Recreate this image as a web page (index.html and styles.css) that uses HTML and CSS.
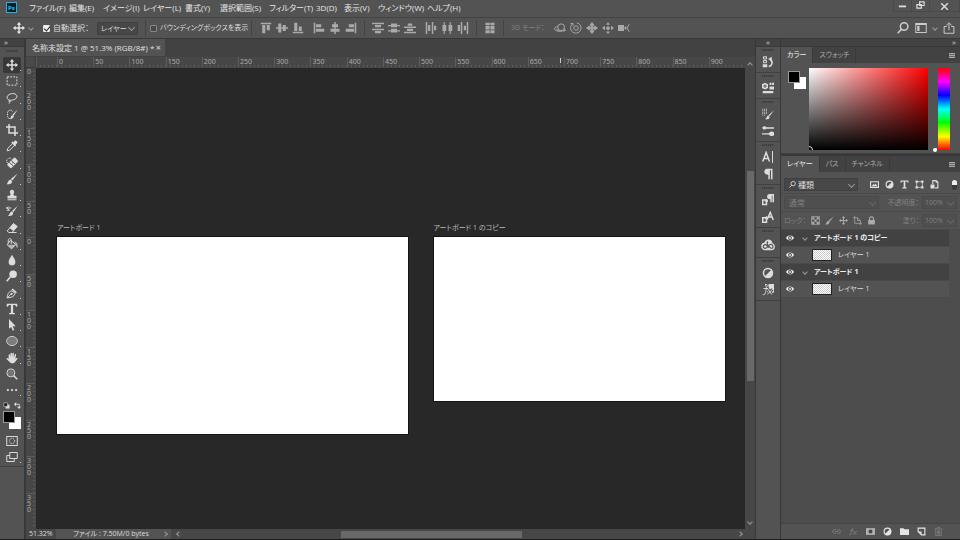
FILE: index.html
```html
<!DOCTYPE html>
<html lang="ja">
<head>
    <meta charset="UTF-8">
    <meta name="viewport" content="width=device-width, initial-scale=1.0">
    <title>名称未設定 1</title>
    <link rel="stylesheet" href="styles.css">
</head>
<body>
    <!-- Icon set -->
    <svg class="sprite" aria-hidden="true">
        <symbol id="move" viewBox="0 0 16 16"><path d="M8 0l3 3.500H9V7h3.500V5L16 8l-3.500 3V9H9v3.500h2L8 16l-3-3.500h2V9H3.500v2L0 8l3.500-3v2H7V3.500H5z"/></symbol>
        <symbol id="marquee" viewBox="0 0 16 16"><rect class="line" x="1.500" y="2.500" width="13" height="11" stroke-dasharray="2.500 1.600"/></symbol>
        <symbol id="lasso" viewBox="0 0 16 16"><path class="line" d="M5 11C1 10 0 6 4 3.500S14 2 14.500 5.500 10 11 6 11c-2-.5-3 1.500-1.500 2s2.500-1 1.500-2M4.500 13c.5 1 0 2-.5 2.500"/></symbol>
        <symbol id="quick" viewBox="0 0 16 16"><path class="line" stroke-dasharray="2 1" d="M8 13.500a4 4 0 0 1-6-2V6c1-4 6-4 7-1"/><path d="M15.500 2L10 10.500 8.500 9zM8.300 9.500l2 1.500c0 3-3 3.500-5 3 1.500-1 1-4 3-4.500z"/></symbol>
        <symbol id="crop" viewBox="0 0 16 16"><path class="thick" d="M4 0v12h12M0 4h12v12"/></symbol>
        <symbol id="dropper" viewBox="0 0 16 16"><path d="M10 3l1.500-2c1-1.500 4.500 1 3.500 3l-2 2 .5 1-1.500 1.500-5-5L8.500 2z"/><path class="line" d="M8 5.500L2.500 11 1.500 14.500 5 13.500 10.500 8"/></symbol>
        <symbol id="heal" viewBox="0 0 16 16"><path d="M10 1.500a2 2 0 0 1 3 0L15 4a2 2 0 0 1 0 3l-7 7a2 2 0 0 1-3 0l-2.500-2.500a2 2 0 0 1 0-3z"/><path class="cut" d="M7 4.500l5 5M4.500 7l5 5M8 8h1"/><path class="line" stroke-dasharray="1.500 1" d="M2 8C-1 4 3 0 7 2"/></symbol>
        <symbol id="brush" viewBox="0 0 16 16"><path d="M15.500.5L8.500 10 6.500 8zM6 8.500L8 10.500c.5 4-4 5-7.500 4.500C3 13.500 2 9.500 6 8.500z"/></symbol>
        <symbol id="stamp" viewBox="0 0 16 16"><path d="M8 1a3 3 0 0 1 2.500 4.500C9.500 7 10 8 11 9h3v3.500H2V9h3c1-1 1.500-2 .5-3.500A3 3 0 0 1 8 1zM2 13.500h12V15H2z"/></symbol>
        <symbol id="history" viewBox="0 0 16 16"><path d="M15.500 1L10 9.500 8 8zM7.500 8.500l2 1.500c.5 4-3 5-7 4.500 2.500-1 2-5 5-6z"/><path class="line" d="M0 4h7M1 7h4M3 2L1 4l3 2.500"/></symbol>
        <symbol id="eraser" viewBox="0 0 16 16"><path d="M10 2l5 4-5 5.500L5 7.500z"/><path class="line" d="M10 2l5 4-7 8H4L1.500 12zM8 14h6M5 7.500l5 4"/></symbol>
        <symbol id="bucket" viewBox="0 0 16 16"><path class="line" d="M6 3l7 5.500-5.500 6L1.500 9zM3 7V3c0-3 4-3 4 0v5"/><path d="M11 5c3 0 5 2 4.500 8-1.500 0-2.500-2-2-4.500zM2 9h11l-5.500 5z" opacity=".7"/></symbol>
        <symbol id="blur" viewBox="0 0 16 16"><path d="M8 1c2 4 4.500 6 4.500 9.500a4.500 4.500 0 0 1-9 0C3.500 7 6 5 8 1z"/></symbol>
        <symbol id="dodge" viewBox="0 0 16 16"><circle cx="9.500" cy="5.500" r="5"/><path class="thick" d="M6 9l-5 6"/></symbol>
        <symbol id="pen" viewBox="0 0 16 16"><path class="line" d="M1.500 14.500C2 10 3 6 8 5l4 4c-1 4-5 5-10.500 5.500zl5-5"/><circle cx="7.500" cy="9" r="1.500"/><path d="M9 2l5.500 5L13 8.500 7.500 3.500z"/></symbol>
        <symbol id="type" viewBox="0 0 16 16"><path d="M1 1h14v4h-1.500c0-2-1-2.500-4-2.500V13l2.500.5V15H4v-1.500l2.500-.5V2.500c-3 0-4 .5-4 2.500H1z"/></symbol>
        <symbol id="arrow" viewBox="0 0 16 16"><path d="M4 0l9 9.500H9l2 5L9 15.500l-2-5-3 2.500z"/></symbol>
        <symbol id="ellipse" viewBox="0 0 16 16"><ellipse class="line" cx="8" cy="8" rx="7" ry="6"/><ellipse cx="8" cy="8" rx="6" ry="5" opacity=".3"/></symbol>
        <symbol id="hand" viewBox="0 0 16 16"><path d="M3.500 9V4c0-1.200 2-1.200 2 0l.5 3V2c0-1.200 2-1.200 2 0v5l.7-5.300c.2-1.200 2-1 1.900.3L10.400 7.500l1.200-4c.4-1.200 2-.8 1.800.4L12.500 9l1.500-1c1-.5 2 .5 1 1.500L11.500 14c-1 1.500-5 1.500-6 0L1 9.500C.3 8.500 1.500 7.500 2.500 8.500z"/></symbol>
        <symbol id="zoom" viewBox="0 0 16 16"><circle class="line" cx="6.500" cy="6.500" r="5.300"/><circle cx="6.500" cy="6.500" r="4" opacity=".25"/><path class="thick" d="M10 10l5 5"/></symbol>
        <symbol id="dots" viewBox="0 0 16 16"><circle cx="2.500" cy="8" r="1.500"/><circle cx="8" cy="8" r="1.500"/><circle cx="13.500" cy="8" r="1.500"/></symbol>
        <symbol id="mini" viewBox="0 0 16 16"><path d="M6 6h9v9H6z"/><path class="line ink" d="M2 2h8v8H2z"/></symbol>
        <symbol id="swap" viewBox="0 0 16 16"><path class="thick" d="M3 5h9v8"/><path d="M5 0v10L0 5zM7 11h9l-4.500 5z"/></symbol>
        <symbol id="mask" viewBox="0 0 16 16"><rect class="line" x="1" y="2" width="14" height="12"/><circle class="line" stroke-dasharray="1.500 1" cx="8" cy="8" r="3.500"/></symbol>
        <symbol id="screen" viewBox="0 0 16 16"><path class="line" d="M5 2h10v8H5zM11 10v4H1V6h4"/></symbol>

        <symbol id="al-top" viewBox="0 0 16 16"><path d="M1 1h14v2H1zM3 4h4v11H3zM9 4h4v7H9z"/></symbol>
        <symbol id="al-mid" viewBox="0 0 16 16"><path d="M0 7h16v2H0zM3 2h4v12H3zM9 4h4v8H9z"/></symbol>
        <symbol id="al-bot" viewBox="0 0 16 16"><path d="M1 13h14v2H1zM3 1h4v11H3zM9 6h4v6H9z"/></symbol>
        <symbol id="al-left" viewBox="0 0 16 16"><path d="M1 1h2v14H1zM4 3h7v4H4zM4 9h11v4H4z"/></symbol>
        <symbol id="al-cen" viewBox="0 0 16 16"><path d="M7 0h2v16H7zM4 3h8v4H4zM2 9h12v4H2z"/></symbol>
        <symbol id="al-right" viewBox="0 0 16 16"><path d="M13 1h2v14h-2zM5 3h7v4H5zM1 9h11v4H1z"/></symbol>
        <symbol id="di-top" viewBox="0 0 16 16"><path d="M0 1h16v2H0zM4 4h8v3H4zM0 9h16v2H0zM4 12h8v3H4z"/></symbol>
        <symbol id="di-mid" viewBox="0 0 16 16"><path d="M0 4h16v1.500H0zM4 2h8v5H4zM0 11h16v1.500H0zM4 9h8v5H4z"/></symbol>
        <symbol id="di-bot" viewBox="0 0 16 16"><path d="M0 6h16v2H0zM5 2h6v3H5zM0 13h16v2H0zM4 9h8v3H4z"/></symbol>
        <symbol id="di-left" viewBox="0 0 16 16"><path d="M1 0h2v16H1zM4 4h3v8H4zM9 0h2v16H9zM12 5h3v6h-3z"/></symbol>
        <symbol id="di-cen" viewBox="0 0 16 16"><path d="M3.500 0H5v16H3.500zM2 4h5v8H2zM11.500 0H13v16h-1.500zM10 4h5v8h-5z"/></symbol>
        <symbol id="di-right" viewBox="0 0 16 16"><path d="M5 0h2v16H5zM1 4h3v8H1zM13 0h2v16h-2zM9 5h3v6H9z"/></symbol>
        <symbol id="auto" viewBox="0 0 16 16"><path d="M2 1h5.500v3H2zM8.500 1H14v3H8.500zM2 5h5.500v5H2zM8.500 5H14v5H8.500zM2 11h5.500v4H2zM8.500 11H14v4H8.500z"/></symbol>
        <symbol id="orbit" viewBox="0 0 16 16"><circle class="line" cx="9.500" cy="7" r="4.500"/><path class="line" d="M5 6C0 7-1 10 3 11.500s9 1 12-1M3 9l4 4M13 8.500l2.500 2-2.500 2.500"/></symbol>
        <symbol id="roll" viewBox="0 0 16 16"><circle class="line" cx="8" cy="8" r="3"/><path class="line" d="M4 2a7 7 0 1 0 5-1M4 2H1M4 2v3"/></symbol>
        <symbol id="pan" viewBox="0 0 16 16"><path d="M8 0l3 4H9v3h3V5l4 3-4 3V9H9v3h2l-3 4-3-4h2V9H4v2L0 8l4-3v2h3V4H5z"/><path class="line" d="M5 5h6v6H5z"/></symbol>
        <symbol id="slide" viewBox="0 0 16 16"><circle cx="8" cy="8" r="2.500"/><path d="M8 0l2.500 3.500h-5zM8 16l2.500-3.500h-5zM0 8l4-3v6zM16 8l-4-3v6z"/></symbol>
        <symbol id="camera" viewBox="0 0 16 16"><path d="M0 4h8v8H0zM8 8l3-3v6z"/><path class="line" d="M15 3l-3 5 3 5"/></symbol>
        <symbol id="search" viewBox="0 0 16 16"><circle class="thick" cx="9.500" cy="6" r="5"/><path class="thick" d="M6 9.500l-5 5.500"/></symbol>
        <symbol id="work" viewBox="0 0 16 16"><rect class="line" x="1" y="2" width="14" height="12"/><path d="M3 5h3v7H3zM1 2h14v2H1z"/></symbol>
        <symbol id="share" viewBox="0 0 16 16"><path class="line" d="M5 6H1.500v9h13V6H11M8 11V2M4.500 4.500L8 1l3.500 3.500"/></symbol>

        <symbol id="p-history" viewBox="0 0 16 16"><path class="line" d="M2 1h4v3H2zM2 6h4v3H2z"/><path d="M1 11h6v4H1z"/><path class="thick" d="M9 14c5-1 6-7 2-9"/><path d="M8 4l5-3v6z"/></symbol>
        <symbol id="p-lib" viewBox="0 0 16 16"><path d="M0 3l4-2 4 2v5l-4 2-4-2zM10 1h2.500v3H10zM13.500 1H16v3h-2.500zM10 6h6v4h-6zM1 12h14v3H1z"/><circle class="cut" cx="4" cy="5.500" r="1.500"/></symbol>
        <symbol id="p-brush" viewBox="0 0 16 16"><path d="M16 3L10 11 8.500 9.500zM8 10l2 1.500c0 3.500-3 4-6 3.500 2-1 2-4 4-5z"/><path class="line" stroke-dasharray="1.200 .8" d="M1 1v9M3.500 1v9M6 1v7"/></symbol>
        <symbol id="p-brushes" viewBox="0 0 16 16"><path d="M0 4c2-3 4-3 6-1h10v2H6c-2 2-4 1-6-1zM0 11h9c2-3 5-3 7-1v4c-2 1-5 1-7-1.500H0z"/></symbol>
        <symbol id="p-char" viewBox="0 0 16 16"><path class="thick" d="M1 14L5.500 2 10 14M3 10h5"/><path class="line" d="M14 0v16"/></symbol>
        <symbol id="p-para" viewBox="0 0 16 16"><path d="M7 1h7v14h-2V3h-1.500v12h-2V9C1 9 2 1 7 1z"/></symbol>
        <symbol id="p-pstyle" viewBox="0 0 16 16"><path d="M10 0h6v11h-2V2h-1v9h-2V7C5 7 6 0 10 0z"/><circle cx="6" cy="9" r="2"/><path class="thick" d="M1 8h5v6H1z"/></symbol>
        <symbol id="p-cstyle" viewBox="0 0 16 16"><path class="thick" d="M7 11l4-9 4 10M9 8h5"/><circle cx="6" cy="9" r="2"/><path class="thick" d="M1 9h5v6H1z"/></symbol>
        <symbol id="p-cc" viewBox="0 0 16 16"><path d="M4 5c2-5 9-4 9 1 4 1 4 8-1 8H4C-1 13-1 6 4 5z"/><path class="cut" d="M9 11L6.500 8.500C4 6 1 9.500 3.500 11.500c2 1 3.500-.5 5-2.500s4-2.500 5 0-1 3-2.500 2.500L8 8.500C7 7 6 5.500 8 4"/></symbol>
        <symbol id="p-adj" viewBox="0 0 16 16"><circle class="thick" cx="8" cy="8" r="6"/><path d="M12.500 3.500a6 6 0 0 1-9 9z"/></symbol>
        <symbol id="p-fx" viewBox="0 0 16 16"><path d="M4 0h12v11l-3 2H4z"/><path class="cut wide" d="M9 2C5 2 6 6 5 10s-2 5-4 4M2 6h7M8 7l5 7M14 7l-7 7"/><path class="line" d="M9 2C5 2 6 6 5 10s-2 5-4 4M2 6h6M8 7l5 7M14 7l-7 7"/></symbol>

        <symbol id="f-img" viewBox="0 0 16 16"><path class="thick" d="M1 3h14v10H1z"/><path d="M3 11l3-4 2 2 2-3 3 5z"/></symbol>
        <symbol id="f-shape" viewBox="0 0 16 16"><path class="line" d="M3 3h10v10H3z"/><path d="M1 1h4v4H1zM11 1h4v4h-4zM1 11h4v4H1zM11 11h4v4h-4z"/></symbol>
        <symbol id="f-smart" viewBox="0 0 16 16"><path class="thick" d="M5 7V1h6l3 3v10H9"/><path d="M1 8h7v7H1zM10 1l4 4h-4z"/></symbol>
        <symbol id="l-trans" viewBox="0 0 16 16"><path class="line" d="M1 1h14v14H1z"/><path d="M2 2h4v4H2zM10 2h4v4h-4zM6 6h4v4H6zM2 10h4v4H2zM10 10h4v4h-4z"/></symbol>
        <symbol id="l-board" viewBox="0 0 16 16"><path class="line" d="M3 0v13h13M0 3h8l5 5v8M8 3v5h5"/></symbol>
        <symbol id="lock" viewBox="0 0 16 16"><path class="thick" d="M4.500 7V4.500c0-4 7-4 7 0V7"/><path d="M2 7h12v8H2z"/></symbol>
        <symbol id="eye" viewBox="0 0 16 16"><path d="M0 8c4-6.500 12-6.500 16 0-4 6.500-12 6.500-16 0z"/><circle class="hole" cx="8" cy="8" r="3.800"/><circle cx="8" cy="8" r="1.800"/></symbol>
        <symbol id="link" viewBox="0 0 16 16"><path class="line" d="M7 11H4a3 3 0 0 1 0-6h3M9 5h3a3 3 0 0 1 0 6H9M5 8h6"/></symbol>
        <symbol id="fx" viewBox="0 0 16 16"><path class="line" d="M8 2C5 2 5 6 4 10s-2 5-4 4M2 6h6M8 7l5 7M14 7l-7 7"/></symbol>
        <symbol id="b-mask" viewBox="0 0 16 16"><path d="M0 2h16v12H0z"/><circle class="hole" cx="8" cy="8" r="3.500"/></symbol>
        <symbol id="folder" viewBox="0 0 16 16"><path d="M0 2h6l2 2h8v10H0z"/></symbol>
        <symbol id="new" viewBox="0 0 16 16"><path class="thick" d="M2 2h12v12H8L2 8z"/><path d="M2 8h6v6z"/></symbol>
        <symbol id="trash" viewBox="0 0 16 16"><path class="line" d="M1 3.500h14M6 3V1h4v2M3 4v11h10V4M6 6v7M8 6v7M10 6v7"/></symbol>
    </svg>

    <div class="app">
        <header class="menubar">
            <svg class="logo" viewBox="0 0 22 22" role="img" aria-label="Photoshop"><rect x="1" y="1" width="20" height="20"/><text x="4" y="15">Ps</text></svg>
            <nav class="menus">
                <a href="#">ファイル(F)</a>
                <a href="#">編集(E)</a>
                <a href="#">イメージ(I)</a>
                <a href="#">レイヤー(L)</a>
                <a href="#">書式(Y)</a>
                <a href="#">選択範囲(S)</a>
                <a href="#">フィルター(T)</a>
                <a href="#">3D(D)</a>
                <a href="#">表示(V)</a>
                <a href="#">ウィンドウ(W)</a>
                <a href="#">ヘルプ(H)</a>
            </nav>
            <div class="window-buttons">
                <button type="button" aria-label="最小化"><svg viewBox="0 0 10 10"><path class="thick" d="M1 6h8"/></svg></button>
                <button type="button" aria-label="元に戻す"><svg viewBox="0 0 10 10"><path class="line" d="M4 1h5v4H4zM1 4h5v4H1z"/></svg></button>
                <button type="button" aria-label="閉じる"><svg viewBox="0 0 10 10"><path class="line" d="M2 2l6 6M8 2L2 8"/></svg></button>
            </div>
        </header>

        <div class="options">
            <svg class="icon bright"><use href="#move"/></svg>
            <i class="chev"></i>
            <div class="auto-select"><input type="checkbox" id="autoSelect" checked><label for="autoSelect">自動選択：</label></div>
            <div class="select target"><select aria-label="自動選択の対象"><option>レイヤー</option></select></div>
            <i class="sep"></i>
            <div class="bounds"><input type="checkbox" id="bounds"><label for="bounds">バウンディングボックスを表示</label></div>
            <i class="sep"></i>
            <div class="group">
                <svg class="icon"><use href="#al-top"/></svg>
                <svg class="icon"><use href="#al-mid"/></svg>
                <svg class="icon"><use href="#al-bot"/></svg>
            </div>
            <div class="group">
                <svg class="icon"><use href="#al-left"/></svg>
                <svg class="icon"><use href="#al-cen"/></svg>
                <svg class="icon"><use href="#al-right"/></svg>
            </div>
            <i class="sep"></i>
            <div class="group">
                <svg class="icon"><use href="#di-top"/></svg>
                <svg class="icon"><use href="#di-mid"/></svg>
                <svg class="icon"><use href="#di-bot"/></svg>
            </div>
            <div class="group">
                <svg class="icon"><use href="#di-left"/></svg>
                <svg class="icon"><use href="#di-cen"/></svg>
                <svg class="icon"><use href="#di-right"/></svg>
            </div>
            <i class="sep"></i>
            <svg class="icon"><use href="#auto"/></svg>
            <i class="sep"></i>
            <span class="mode">3D モード：</span>
            <div class="group">
                <svg class="icon"><use href="#orbit"/></svg>
                <svg class="icon"><use href="#roll"/></svg>
                <svg class="icon"><use href="#pan"/></svg>
                <svg class="icon"><use href="#slide"/></svg>
                <svg class="icon"><use href="#camera"/></svg>
            </div>
            <div class="options-right">
                <svg class="icon"><use href="#search"/></svg>
                <svg class="icon"><use href="#work"/></svg>
                <i class="chev"></i>
                <svg class="icon"><use href="#share"/></svg>
            </div>
        </div>

        <main class="workspace">
            <aside class="toolbar">
                <div class="collapse left">»</div>
                <i class="grip"></i>
                <div class="tools">
                    <button type="button" class="tool active" aria-label="移動"><svg><use href="#move"/></svg></button>
                    <button type="button" class="tool" aria-label="長方形選択"><svg><use href="#marquee"/></svg></button>
                    <button type="button" class="tool" aria-label="なげなわ"><svg><use href="#lasso"/></svg></button>
                    <button type="button" class="tool" aria-label="クイック選択"><svg><use href="#quick"/></svg></button>
                    <button type="button" class="tool" aria-label="切り抜き"><svg><use href="#crop"/></svg></button>
                    <button type="button" class="tool" aria-label="スポイト"><svg><use href="#dropper"/></svg></button>
                    <button type="button" class="tool" aria-label="修復ブラシ"><svg><use href="#heal"/></svg></button>
                    <button type="button" class="tool" aria-label="ブラシ"><svg><use href="#brush"/></svg></button>
                    <button type="button" class="tool" aria-label="スタンプ"><svg><use href="#stamp"/></svg></button>
                    <button type="button" class="tool" aria-label="ヒストリーブラシ"><svg><use href="#history"/></svg></button>
                    <button type="button" class="tool" aria-label="消しゴム"><svg><use href="#eraser"/></svg></button>
                    <button type="button" class="tool" aria-label="塗りつぶし"><svg><use href="#bucket"/></svg></button>
                    <button type="button" class="tool" aria-label="ぼかし"><svg><use href="#blur"/></svg></button>
                    <button type="button" class="tool" aria-label="覆い焼き"><svg><use href="#dodge"/></svg></button>
                    <button type="button" class="tool" aria-label="ペン"><svg><use href="#pen"/></svg></button>
                    <button type="button" class="tool" aria-label="文字"><svg><use href="#type"/></svg></button>
                    <button type="button" class="tool" aria-label="パス選択"><svg><use href="#arrow"/></svg></button>
                    <button type="button" class="tool" aria-label="楕円形"><svg><use href="#ellipse"/></svg></button>
                    <button type="button" class="tool" aria-label="手のひら"><svg><use href="#hand"/></svg></button>
                    <button type="button" class="tool single" aria-label="ズーム"><svg><use href="#zoom"/></svg></button>
                    <button type="button" class="tool" aria-label="その他"><svg><use href="#dots"/></svg></button>
                </div>
                <div class="swatch-tools">
                    <svg><use href="#mini"/></svg>
                    <svg><use href="#swap"/></svg>
                </div>
                <div class="swatches"><i class="bg"></i><i class="fg"></i></div>
                <div class="modes">
                    <button type="button" class="tool single" aria-label="クイックマスク"><svg><use href="#mask"/></svg></button>
                    <button type="button" class="tool" aria-label="スクリーンモード"><svg><use href="#screen"/></svg></button>
                </div>
            </aside>

            <section class="document">
                <div class="doc-tabs">
                    <div class="doc-tab"><span>名称未設定 1 @ 51.3% (RGB/8#) *</span><button type="button" aria-label="閉じる">×</button></div>
                </div>
                <div class="doc-body">
                    <i class="corner"></i>
                    <div class="ruler-x">
                        <i class="lead"></i>
                        <span>0</span><span>50</span><span>100</span><span>150</span><span>200</span><span>250</span><span>300</span><span>350</span><span>400</span><span>450</span><span>500</span><span>550</span><span>600</span><span class="marked">650</span><span>700</span><span>750</span><span>800</span><span>850</span><span>900</span>
                    </div>
                    <div class="ruler-y">
                        <span class="lead">0</span>
                        <span>200</span><span>150</span><span>100</span><span>50</span><span>0</span><span class="marked">50</span><span>100</span><span>150</span><span>200</span><span>250</span><span>300</span><span>350</span>
                    </div>
                    <div class="canvas">
                        <figure class="board first"><figcaption>アートボード 1</figcaption><div class="paper"></div></figure>
                        <figure class="board second"><figcaption>アートボード 1 のコピー</figcaption><div class="paper"></div></figure>
                    </div>
                    <div class="scroll-y">
                        <i class="chev up"></i>
                        <div class="track"><i class="before"></i><i class="thumb"></i><i class="after"></i></div>
                        <i class="chev"></i>
                    </div>
                </div>
                <footer class="status">
                    <span class="percent">51.32%</span>
                    <span class="file">ファイル : 7.50M/0 bytes</span>
                    <i class="chev right"></i>
                    <div class="scroll-x">
                        <i class="chev prev"></i>
                        <div class="track"><i class="before"></i><i class="thumb"></i><i class="after"></i></div>
                        <i class="chev right"></i>
                    </div>
                </footer>
            </section>

            <aside class="dock">
                <div class="collapse">«</div>
                <div class="dock-group"><i class="grip"></i><svg><use href="#p-history"/></svg></div>
                <div class="dock-group"><i class="grip"></i><svg><use href="#p-lib"/></svg></div>
                <div class="dock-group"><i class="grip"></i><svg><use href="#p-brush"/></svg><svg><use href="#p-brushes"/></svg></div>
                <div class="dock-group"><i class="grip"></i><svg><use href="#p-char"/></svg><svg><use href="#p-para"/></svg></div>
                <div class="dock-group"><i class="grip"></i><svg><use href="#p-pstyle"/></svg><svg><use href="#p-cstyle"/></svg></div>
                <div class="dock-group large"><i class="grip"></i><svg><use href="#p-cc"/></svg></div>
                <div class="dock-group"><i class="grip"></i><svg><use href="#p-adj"/></svg><svg><use href="#p-fx"/></svg></div>
            </aside>

            <aside class="panels">
                <div class="collapse right">»</div>
                <section class="panel color">
                    <div class="tabs">
                        <button type="button" class="active">カラー</button>
                        <button type="button">スウォッチ</button>
                        <i class="burger"></i>
                    </div>
                    <div class="color-body">
                        <div class="swatches"><i class="bg"></i><i class="fg"></i></div>
                        <div class="spectrum"><i class="picker"></i></div>
                        <div class="hue"><i class="pointer"></i></div>
                    </div>
                </section>

                <section class="panel layers">
                    <div class="tabs">
                        <button type="button" class="active">レイヤー</button>
                        <button type="button">パス</button>
                        <button type="button">チャンネル</button>
                        <i class="burger"></i>
                    </div>
                    <div class="row filter">
                        <div class="select kind"><svg><use href="#search"/></svg><select aria-label="フィルターの種類"><option>種類</option></select></div>
                        <div class="filter-icons">
                            <svg><use href="#f-img"/></svg>
                            <svg><use href="#p-adj"/></svg>
                            <svg><use href="#type"/></svg>
                            <svg><use href="#f-shape"/></svg>
                            <svg><use href="#f-smart"/></svg>
                        </div>
                        <i class="toggle"></i>
                    </div>
                    <div class="row dim">
                        <div class="select blend"><select aria-label="描画モード" disabled><option>通常</option></select></div>
                        <label for="opacity">不透明度：</label>
                        <div class="select amount"><select id="opacity" disabled><option>100%</option></select></div>
                    </div>
                    <div class="row dim">
                        <span class="lock-label">ロック：</span>
                        <div class="lock-icons">
                            <svg><use href="#l-trans"/></svg>
                            <svg><use href="#brush"/></svg>
                            <svg><use href="#move"/></svg>
                            <svg><use href="#l-board"/></svg>
                            <svg><use href="#lock"/></svg>
                        </div>
                        <label for="fill">塗り：</label>
                        <div class="select amount"><select id="fill" disabled><option>100%</option></select></div>
                    </div>
                    <ul class="layer-list">
                        <li class="artboard"><svg class="eye"><use href="#eye"/></svg><i class="chev"></i><span>アートボード 1 のコピー</span></li>
                        <li><svg class="eye"><use href="#eye"/></svg><i class="thumbnail"></i><span>レイヤー 1</span></li>
                        <li class="artboard"><svg class="eye"><use href="#eye"/></svg><i class="chev"></i><span>アートボード 1</span></li>
                        <li><svg class="eye"><use href="#eye"/></svg><i class="thumbnail"></i><span>レイヤー 1</span></li>
                    </ul>
                    <div class="layer-actions">
                        <svg class="off"><use href="#link"/></svg>
                        <svg class="off"><use href="#fx"/></svg>
                        <svg class="half"><use href="#b-mask"/></svg>
                        <svg><use href="#p-adj"/></svg>
                        <svg><use href="#folder"/></svg>
                        <svg><use href="#new"/></svg>
                        <svg class="off"><use href="#trash"/></svg>
                    </div>
                </section>
            </aside>
        </main>
    </div>
</body>
</html>
```
FILE: styles.css
```css
* {
    box-sizing: border-box;
}

body {
    margin: 0;
    background-color: #1e1e1e;
    color: #ddd;
    font-family: "Open Sans", "Noto Sans CJK JP", sans-serif;
    font-size: 8px;
    line-height: 12px;
    font-feature-settings: "palt";
}

button, select, input {
    margin: 0;
    padding: 0;
    border: 0;
    background: none;
    color: inherit;
    font: inherit;
    font-feature-settings: inherit;
}

select {
    appearance: none;
    width: 100%;
    opacity: 1;
}

a {
    color: inherit;
    text-decoration: none;
}

svg {
    display: block;
    fill: currentColor;
    flex: none;
}

.sprite {
    position: absolute;
    width: 0;
    height: 0;
}

.line, .thick {
    fill: none;
    stroke: currentColor;
    stroke-width: 1.3px;
}

.thick {
    stroke-width: 2px;
}

.cut {
    fill: none;
    stroke: #535353;
    stroke-width: 1.3px;
}

.wide {
    stroke-width: 4px;
}

.hole {
    fill: #454545;
}

.ink {
    fill: #111;
}

/* Shared bits */
.app {
    display: flex;
    flex-direction: column;
    height: 100vh;
    padding-bottom: 1px;
    white-space: nowrap;
    overflow: hidden;
}

.icon {
    width: 12px;
    height: 12px;
}

.chev {
    flex: none;
    width: 4px;
    height: 4px;
    border: solid #999;
    border-width: 0 1px 1px 0;
    transform: rotate(45deg);
}

.chev.up {
    transform: rotate(225deg);
}

.chev.right {
    transform: rotate(-45deg);
}

.chev.prev {
    transform: rotate(135deg);
}

.sep {
    width: 1px;
    height: 16px;
    background-color: #434343;
}

.grip {
    display: block;
    width: 12px;
    height: 2px;
    margin: 0 auto;
    background: repeating-linear-gradient(to right, #3c3c3c 0 1px, #4c4c4c 1px 2px);
}

.collapse {
    height: 8px;
    padding: 0 4px;
    border-bottom: 1px solid #383838;
    background-color: #424242;
    color: #ccc;
    font-size: 8px;
    line-height: 5px;
    text-align: center;
}

.collapse.left {
    text-align: left;
}

.collapse.right {
    text-align: right;
}

.select {
    position: relative;
    border: 1px solid #404040;
    border-radius: 1px;
    background-color: #474747;
}

.select::after {
    content: "";
    position: absolute;
    top: 50%;
    right: 3px;
    width: 4px;
    height: 4px;
    margin-top: -3px;
    border: solid #999;
    border-width: 0 1px 1px 0;
    transform: rotate(45deg);
    pointer-events: none;
}

input[type="checkbox"] {
    appearance: none;
    position: relative;
    flex: none;
    width: 7px;
    height: 7px;
    border: 1px solid #888;
    border-radius: 1px;
    background-color: #484848;
}

input[type="checkbox"]:checked {
    border-color: #eee;
    background-color: #eee;
}

input[type="checkbox"]:checked::after {
    content: "";
    position: absolute;
    left: 1px;
    top: -1px;
    width: 3px;
    height: 5px;
    border: solid #222;
    border-width: 0 1px 1px 0;
    transform: rotate(40deg);
}

/* Menu bar */
.menubar {
    display: flex;
    align-items: center;
    flex: none;
    height: 18px;
    padding: 0 0 2px 6px;
    border-bottom: 1px solid #434343;
    background-color: #535353;
}

.logo {
    width: 11px;
    height: 11px;
    margin-right: 12px;
}

.logo rect {
    fill: #001d2b;
    stroke: #20b4e4;
    stroke-width: 2px;
}

.logo text {
    fill: #31c5f0;
    font-size: 12px;
    font-weight: bold;
}

.menus {
    display: grid;
    grid-template-columns: 40px 34px 40px 42px 35px 49px 47px 28px 34px 49px auto;
    color: #e6e6e6;
}

.window-buttons {
    display: flex;
    align-self: flex-start;
    height: 12px;
    margin-left: auto;
    border: 1px solid #494949;
    border-top: 0;
}

.window-buttons button {
    width: 18px;
    padding: 1px 4px;
    border-right: 1px solid #494949;
}

.window-buttons button:last-child {
    width: 29px;
    padding: 1px 9px;
    border-right: 0;
}

/* Options bar */
.options {
    display: flex;
    align-items: center;
    flex: none;
    height: 21px;
    padding: 0 5px 0 13px;
    border-bottom: 1px solid #383838;
    background-color: #535353;
    color: #aaa;
    font-size: 7px;
}

.options .bright {
    color: #e6e6e6;
}

.options > .chev {
    margin: 0 10px 0 4px;
}

.auto-select, .bounds {
    display: flex;
    align-items: center;
    gap: 3px;
    color: #ddd;
}

.auto-select {
    width: 54px;
    font-size: 8px;
}

.bounds {
    width: 97px;
}

.target {
    width: 41px;
    height: 13px;
    padding-left: 3px;
    color: #ddd;
    line-height: 11px;
}

.options .sep {
    margin: 0 4px 0 7px;
}

.options .sep ~ .sep {
    margin: 0 7px;
}

.options .bounds + .sep {
    margin: 0 8px 0 4px;
}

.group {
    display: flex;
    gap: 4px;
}

.group + .group {
    margin-left: 9px;
}

.mode {
    width: 43px;
    color: #808080;
}

.options-right {
    display: flex;
    align-items: center;
    gap: 6px;
    margin-left: auto;
    color: #ccc;
}

/* Workspace */
.workspace {
    display: flex;
    flex: 1;
    min-height: 0;
    background-color: #383838;
}

.toolbar {
    display: flex;
    flex-direction: column;
    flex: none;
    width: 24px;
    margin-right: 2px;
    background-color: #535353;
}

.toolbar .grip {
    margin-top: 3px;
}

.dock .grip {
    margin-top: 2px;
}

.tools {
    display: flex;
    flex-direction: column;
    justify-content: space-between;
    height: 341px;
    margin: 5px 0 0 3px;
}

.tool {
    position: relative;
    width: 18px;
    height: 16px;
    padding: 2px 3px;
    border-radius: 2px;
    color: #ddd;
}

.tool.active {
    background-color: #383838;
}

.tool svg {
    width: 12px;
    height: 12px;
}

.tool::after {
    content: "";
    position: absolute;
    right: 0;
    bottom: 2px;
    width: 1px;
    height: 1px;
    background-color: #ccc;
}

.tool.single::after {
    display: none;
}

.swatch-tools {
    display: flex;
    gap: 4px;
    margin: 4px 0 2px 3px;
}

.swatch-tools svg {
    width: 7px;
    height: 7px;
}

.swatches {
    display: grid;
    flex: none;
    width: 18px;
    height: 18px;
}

.swatches i {
    grid-area: 1 / 1;
    width: 12px;
    height: 12px;
    border: 1px solid #999;
    background-color: #000;
}

.swatches .bg {
    place-self: end;
    border-color: #fff;
    background-color: #fff;
}

.toolbar .swatches {
    margin: 0 0 4px 3px;
}

.modes {
    display: flex;
    flex-direction: column;
    padding: 0 0 1px 3px;
    border-bottom: 1px solid #404040;
}

/* Document window */
.document {
    display: flex;
    flex-direction: column;
    flex: 1;
    min-width: 0;
    margin-right: 1px;
    background-color: #424242;
}

.doc-tabs {
    flex: none;
    height: 18px;
}

.doc-tab {
    display: flex;
    align-items: center;
    width: 139px;
    height: 17px;
    padding: 0 4px 0 6px;
    background-color: #535353;
    color: #e0e0e0;
}

.doc-tab button {
    margin-left: auto;
    font-size: 9px;
    line-height: 10px;
}

.doc-body {
    display: grid;
    grid-template: 11px 1fr / 10px 1fr 10px;
    flex: 1;
    min-height: 0;
}

.corner {
    border: solid #3c3c3c;
    border-width: 0 1px 1px 0;
    background-color: #4a4a4a;
}

.ruler-x, .ruler-y {
    display: grid;
    overflow: hidden;
    color: #aaa;
    font-family: "Noto Sans", sans-serif;
    font-size: 7px;
    background-color: #474747;
}

.ruler-x {
    grid-template-columns: 21px repeat(19, 1fr);
    padding-bottom: 1px;
    line-height: 10px;
}

.ruler-x span, .ruler-x .lead {
    position: relative;
    padding-left: 1px;
    border-left: 1px solid #5c5c5c;
    background: repeating-linear-gradient(to right, transparent 0 3px, #5c5c5c 3px 4px) bottom / 100% 2px no-repeat;
}

.ruler-x .marked::after {
    content: "";
    position: absolute;
    right: 3px;
    top: 1px;
    width: 1px;
    height: 5px;
    background-color: #ccc;
}

.ruler-y {
    grid-template-rows: 23px repeat(12, 1fr);
    padding-right: 1px;
}

.ruler-y span {
    width: 9px;
    padding: 1px 4px 0 1px;
    border-top: 1px solid #5c5c5c;
    line-height: 6px;
    white-space: normal;
    word-break: break-all;
    background: repeating-linear-gradient(to bottom, transparent 0 3px, #5c5c5c 3px 4px) right / 2px 100% no-repeat;
}

.ruler-y .lead {
    border-top: 0;
}

.ruler-y .marked {
    background-color: #4e4e4e;
}

.canvas {
    display: flex;
    gap: 26px;
    padding: 154px 20px 0 21px;
    overflow: hidden;
    background-color: #282828;
}

.board {
    margin: 0;
}

.first {
    flex: 350;
}

.second {
    flex: 291;
}

.board figcaption {
    height: 15px;
    color: #bbb;
    font-size: 7px;
    line-height: 12px;
}

.paper {
    background-color: #fff;
    outline: 1px solid #151515;
}

.first .paper {
    aspect-ratio: 350 / 197;
}

.second .paper {
    aspect-ratio: 291 / 164;
}

.scroll-y {
    display: flex;
    flex-direction: column;
    align-items: center;
    grid-area: 1 / 3 / 3 / 4;
    padding: 6px 0 5px;
    background-color: #474747;
}

.track {
    display: flex;
    flex: 1;
}

.thumb {
    background-color: #696969;
}

.scroll-y .track {
    flex-direction: column;
    width: 7px;
}

.scroll-y .before {
    flex: 104;
}

.scroll-y .thumb {
    flex: 209;
}

.scroll-y .after {
    flex: 138;
}

.status {
    display: flex;
    align-items: center;
    flex: none;
    height: 10px;
    background-color: #535353;
    font-size: 7px;
    line-height: 10px;
}

.percent {
    width: 30px;
    padding-left: 3px;
    background-color: #474747;
}

.file {
    width: 107px;
    padding-left: 17px;
}

.scroll-x {
    display: flex;
    align-items: center;
    flex: 1;
    height: 10px;
    margin-left: 4px;
    padding: 0 13px 0 6px;
    background-color: #474747;
}

.scroll-x .track {
    height: 7px;
}

.scroll-x .before {
    flex: 160;
}

.scroll-x .thumb {
    flex: 181;
}

.scroll-x .after {
    flex: 216;
}

/* Icon dock */
.dock {
    flex: none;
    width: 24px;
    margin-right: 1px;
    background-color: #535353;
}

.dock-group {
    display: flex;
    flex-direction: column;
    align-items: center;
    gap: 5px;
    padding-bottom: 4px;
    border-bottom: 1px solid #404040;
    color: #ddd;
}

.dock-group svg {
    width: 12px;
    height: 12px;
}

.dock-group.large svg {
    width: 14px;
    height: 16px;
}

/* Panels */
.panels {
    display: flex;
    flex-direction: column;
    flex: none;
    width: 179px;
}

.panel {
    background-color: #535353;
}

.tabs {
    display: flex;
    flex: none;
    height: 16px;
    background-color: #424242;
    color: #aaa;
    font-size: 7px;
}

.tabs button {
    padding: 0 6px;
    border-right: 1px solid #3a3a3a;
}

.tabs .active {
    background-color: #535353;
    color: #eee;
}

.burger {
    width: 6px;
    height: 5px;
    margin: 6px 5px 0 auto;
    background: repeating-linear-gradient(to bottom, #aaa 0 1px, #666 1px 2px);
}

.color {
    flex: none;
    margin-bottom: 2px;
    border-bottom: 1px solid #404040;
}

.color-body {
    display: flex;
    height: 90px;
    padding: 5px 10px 3px 7px;
}

.color-body .swatches {
    margin: 3px 3px 0 0;
}

.spectrum {
    position: relative;
    flex: 1;
    overflow: hidden;
    background: linear-gradient(to top, #000, transparent), linear-gradient(to right, #fff, #f00);
}

.picker {
    position: absolute;
    left: -4px;
    bottom: -4px;
    width: 8px;
    height: 8px;
    border: 1px solid #ddd;
    border-radius: 50%;
}

.hue {
    position: relative;
    width: 12px;
    margin-left: 10px;
    background: linear-gradient(to bottom, #f00, #f0f, #00f, #0ff, #0f0, #ff0, #f00);
}

.pointer {
    position: absolute;
    left: -5px;
    bottom: -2px;
    width: 4px;
    height: 4px;
    border-radius: 50% 1px 50% 50%;
    background-color: #fff;
}

.layers {
    display: flex;
    flex-direction: column;
    flex: 1;
    min-height: 0;
}

.row {
    display: flex;
    align-items: center;
    flex: none;
    height: 18px;
    padding: 0 3px;
    border-bottom: 1px solid #4a4a4a;
}

.filter {
    height: 22px;
    padding-top: 4px;
}

.dim {
    color: #808080;
    font-size: 7px;
}

.row .select {
    height: 13px;
    padding-left: 4px;
    line-height: 11px;
}

.kind {
    display: flex;
    align-items: center;
    gap: 2px;
    width: 74px;
}

.kind svg {
    width: 7px;
    height: 7px;
}

.filter-icons {
    display: flex;
    gap: 6px;
    margin-left: 12px;
    color: #e0e0e0;
}

.filter-icons svg, .lock-icons svg, .layer-actions svg {
    width: 9px;
    height: 9px;
}

.toggle {
    width: 5px;
    height: 10px;
    margin-left: auto;
    border-radius: 3px;
    background: linear-gradient(to bottom, #eee 5px, #3a3a3a 5px);
}

.dim .select {
    border-color: #4a4a4a;
    background-color: #4f4f4f;
}

.dim .select::after {
    border-color: #696969;
}

.row .blend {
    width: 95px;
    font-size: 8px;
}

.dim label {
    width: 39px;
    margin-left: auto;
    padding-right: 3px;
    text-align: right;
}

.row .amount {
    width: 35px;
    padding-left: 2px;
}

.lock-label {
    width: 27px;
}

.lock-icons {
    display: flex;
    gap: 5px;
    color: #aaa;
}

.layer-list {
    flex: 1;
    margin: 0;
    padding: 0 11px 0 0;
    list-style: none;
    background-color: #4d4d4d;
    font-size: 7px;
}

.layer-list li {
    display: flex;
    align-items: center;
    height: 17px;
    padding-left: 5px;
    border-bottom: 1px solid #4a4a4a;
    background-color: #535353;
}

.layer-list .artboard {
    background-color: #424242;
    color: #eee;
    font-weight: bold;
}

.eye {
    width: 8px;
    height: 8px;
    color: #eee;
}

.layer-list .chev {
    margin: 0 7px 0 9px;
}

.thumbnail {
    width: 20px;
    height: 12px;
    margin: 0 6px 0 18px;
    border: 1px solid #222;
    background: repeating-conic-gradient(#ccc 0 25%, #fff 0 50%) 0 0 / 2px 2px;
}

.layer-actions {
    display: flex;
    align-items: center;
    justify-content: flex-end;
    gap: 8px;
    height: 16px;
    padding-right: 17px;
    border-top: 1px solid #444;
    color: #e6e6e6;
}

.layer-actions .off {
    color: #858585;
}

.layer-actions .half {
    color: #b0b0b0;
}
```
